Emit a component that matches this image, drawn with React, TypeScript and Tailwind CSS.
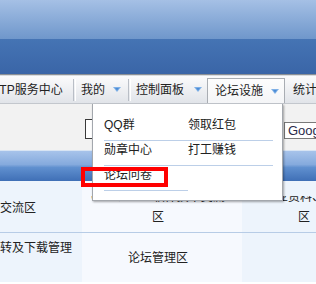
import React from "react";

const font = { fontFamily: '"Liberation Sans", "Noto Sans CJK SC", sans-serif' };

function Arrow() {
  return (
    <svg width="8" height="5" viewBox="0 0 8 5" className="shrink-0">
      <path d="M0 0 L8 0 L4 5 Z" fill="#7fb0e6" />
      <path d="M2 1 L6 1 L4 3.5 Z" fill="#4a8bd6" />
    </svg>
  );
}

function Sep() {
  return <div className="h-[22px] w-[2px] border-l border-[#b9bec6] shadow-[1px_0_0_#ffffff]" />;
}

function MenuItem({ label, wide }: { label: string; wide?: boolean }) {
  return (
    <div className={`h-[25px] border-b border-[#bccfe8] leading-[19px] ${wide ? "w-[85px]" : "w-[84px]"}`}>
      {label}
    </div>
  );
}

// first line of a wrapped cell: only the lower part of the glyphs shows
function CutLine({ text }: { text: string }) {
  return (
    <div className="h-[7px] overflow-hidden">
      <div className="mt-[-5px] whitespace-nowrap leading-[12px]">{text}</div>
    </div>
  );
}

export default function App() {
  return (
    <div className="relative h-[284px] w-[316px] overflow-hidden bg-white text-[12px] text-[#222]" style={font}>
      {/* top banner */}
      <div className="h-[39px] bg-gradient-to-b from-[#a5c0e5] to-[#6f97cb]" />
      <div className="h-[35px] bg-gradient-to-b from-[#4574b4] to-[#3a65a7]" />
      <div className="h-[1px] bg-[#8a8f96]" />
      <div className="h-[1px] bg-[#d9dce0]" />

      {/* nav */}
      <div className="flex h-[28px] items-end border-b border-[#c3c7cd] bg-gradient-to-b from-[#fbfbfc] to-[#e1e4e9]">
        <div className="flex h-[27px] items-center">
          <div className="ml-[-8px] w-[81px] whitespace-nowrap">FTP服务中心</div>
          <Sep />
          <div className="flex w-[53px] items-center pl-[6px]">
            <span>我的</span>
            <span className="ml-[8px]"><Arrow /></span>
          </div>
          <Sep />
          <div className="flex w-[77px] items-center pl-[6px]">
            <span>控制面板</span>
            <span className="ml-[10px]"><Arrow /></span>
          </div>
          <div className="flex h-[25px] w-[78px] items-center self-end border border-b-0 border-[#a9adb3] bg-gradient-to-b from-[#fdfdfd] to-[#f4f5f7] pl-[7px]">
            <span>论坛设施</span>
            <span className="ml-[8px]"><Arrow /></span>
          </div>
          <div className="whitespace-nowrap pl-[8px]">统计</div>
        </div>
      </div>

      {/* search strip */}
      <div className="flex h-[46px] items-start bg-[#f2f2f2]">
        <div className="ml-[85px] mt-[15px] h-[20px] w-[60px] border border-[#3a3a3a] bg-white" />
        <div className="ml-auto mr-[-20px] mt-[18px] flex h-[17px] w-[52px] items-center border border-[#7a7a7a] bg-white pl-[3px] text-[13px] text-[#2a2a4a]">
          Google
        </div>
      </div>

      {/* table header */}
      <div className="h-[1px] bg-[#d8e4f3]" />
      <div className="h-[30px] bg-[linear-gradient(#a7c3ea,#85aadd_45%,#6090cf_55%,#3f6fb6)]" />

      {/* rows */}
      <div className="grid h-[51px] grid-cols-[82px_160px_1fr]">
        <div className="flex items-center whitespace-nowrap bg-[#edf4fc] pt-[3px]">交流区</div>
        <div className="flex flex-col items-center bg-[#f6f9fe] pr-[8px] pt-[15px]">
          <CutLine text="CAE、CFD软件技术交流" />
          <div className="mt-[8px] leading-[12px]">区</div>
        </div>
        <div className="flex flex-col bg-[#edf4fc] pl-[15px] pt-[15px]">
          <CutLine text="<工业资料、主题" />
          <div className="mt-[8px] pl-[41px] leading-[12px]">区</div>
        </div>
      </div>
      <div className="h-[1px] bg-[#b7cce6]" />
      <div className="grid h-[49px] grid-cols-[82px_160px_1fr]">
        <div className="whitespace-nowrap bg-[#edf4fc] pt-[6px]">转及下载管理</div>
        <div className="flex items-center justify-center bg-[#f6f9fe] pr-[8px] pt-[1px]">论坛管理区</div>
        <div className="bg-[#edf4fc]" />
      </div>

      {/* dropdown */}
      <div className="absolute left-[92px] top-[104px] h-[97px] w-[191px] border border-t-0 border-[#a3a7ad] bg-white pl-[11px] pt-[12px] shadow-[1px_1px_2px_rgba(0,0,0,0.35)]">
        <div className="flex">
          <MenuItem label="QQ群" />
          <MenuItem label="领取红包" wide />
        </div>
        <div className="flex">
          <MenuItem label="勋章中心" />
          <MenuItem label="打工赚钱" wide />
        </div>
        <div className="flex">
          <MenuItem label="论坛问卷" />
        </div>
      </div>

      {/* highlight box */}
      <div className="absolute left-[81px] top-[167px] h-[20px] w-[87px] border-[4px] border-[#ff0000]" />
    </div>
  );
}
